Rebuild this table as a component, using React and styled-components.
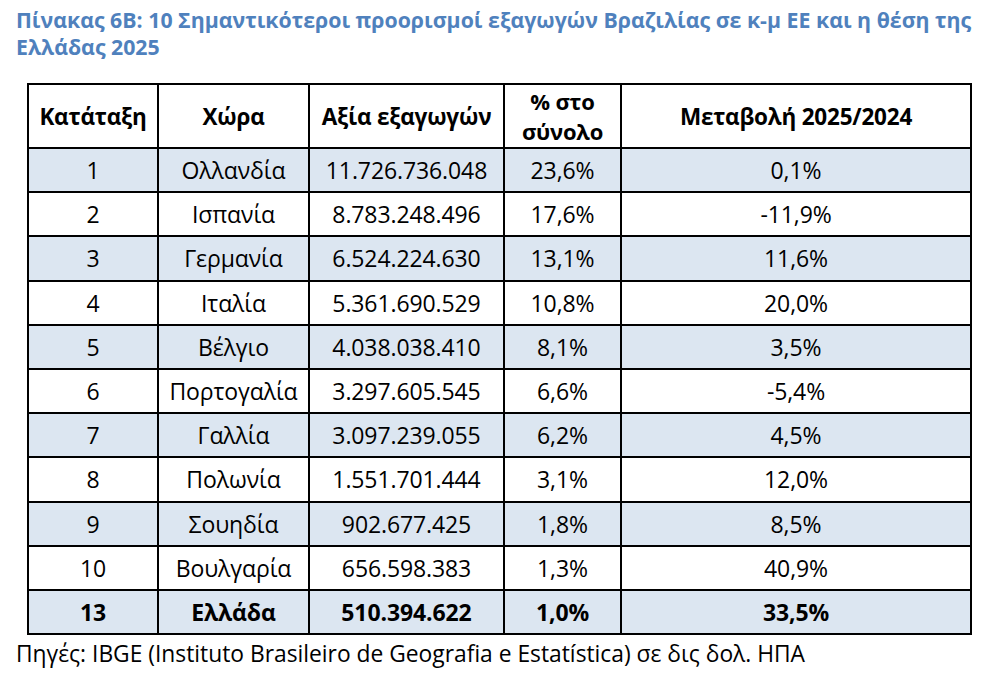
import React from 'react'
import styled, { createGlobalStyle } from 'styled-components'

const rows = [
    ['1', 'Ολλανδία', '11.726.736.048', '23,6%', '0,1%'],
    ['2', 'Ισπανία', '8.783.248.496', '17,6%', '-11,9%'],
    ['3', 'Γερμανία', '6.524.224.630', '13,1%', '11,6%'],
    ['4', 'Ιταλία', '5.361.690.529', '10,8%', '20,0%'],
    ['5', 'Βέλγιο', '4.038.038.410', '8,1%', '3,5%'],
    ['6', 'Πορτογαλία', '3.297.605.545', '6,6%', '-5,4%'],
    ['7', 'Γαλλία', '3.097.239.055', '6,2%', '4,5%'],
    ['8', 'Πολωνία', '1.551.701.444', '3,1%', '12,0%'],
    ['9', 'Σουηδία', '902.677.425', '1,8%', '8,5%'],
    ['10', 'Βουλγαρία', '656.598.383', '1,3%', '40,9%'],
]

const colWidths = [130, 151, 195, 117, 350]

const App = () => {
    return (
        <>
            <GlobalStyle />
            <Page>
                <Title>
                    Πίνακας 6B: 10 Σημαντικότεροι προορισμοί εξαγωγών Βραζιλίας σε κ-μ ΕΕ και η θέση της
                    <br />
                    Ελλάδας 2025
                </Title>
                <Table>
                    <colgroup>
                        {colWidths.map((w, i) => (
                            <col key={i} style={{ width: w }} />
                        ))}
                    </colgroup>
                    <thead>
                        <tr>
                            <HeadCell>Κατάταξη</HeadCell>
                            <HeadCell>Χώρα</HeadCell>
                            <HeadCell>Αξία εξαγωγών</HeadCell>
                            <HeadCell $twoLines>% στο<br />σύνολο</HeadCell>
                            <HeadCell>Μεταβολή 2025/2024</HeadCell>
                        </tr>
                    </thead>
                    <tbody>
                        {rows.map((r, i) => (
                            <Row key={r[0]} $shaded={i % 2 === 0}>
                                {r.map((v, j) => (
                                    <Cell key={j}>{v}</Cell>
                                ))}
                            </Row>
                        ))}
                        <Row $shaded>
                            <Cell $bold>13</Cell>
                            <Cell $bold>Ελλάδα</Cell>
                            <Cell $bold>510.394.622</Cell>
                            <Cell $bold>1,0%</Cell>
                            <Cell $bold>33,5%</Cell>
                        </Row>
                    </tbody>
                </Table>
                <Source>
                    Πηγές: IBGE (Instituto Brasileiro de Geografia e Estatística) σε δις δολ. ΗΠΑ
                </Source>
            </Page>
        </>
    )
}

const GlobalStyle = createGlobalStyle`
    body {
        margin: 0;
        background: #ffffff;
        font-family: "Open Sans", "Noto Sans", sans-serif;
        color: #000000;
    }
`

const Page = styled.div`
    width: 1005px;
    height: 699px;
    padding: 6px 0 0 16px;
    box-sizing: border-box;
    overflow: hidden;
`

const Title = styled.div`
    color: #4f81bd;
    font-weight: 700;
    font-size: 21.3px;
    line-height: 27px;
    white-space: nowrap;
`

const Table = styled.table`
    margin: 23px 0 0 11px;
    border-collapse: collapse;
    table-layout: fixed;
    width: 943px;
    border: 2px solid #000;
`

const HeadCell = styled.th`
    height: 62px;
    padding: 0 2px;
    border: 2px solid #000;
    font-size: ${p => (p.$twoLines ? '22px' : '22.5px')};
    font-weight: 700;
    line-height: ${p => (p.$twoLines ? '30px' : '27px')};
    text-align: center;
    vertical-align: middle;
    letter-spacing: -0.2px;
`

const Row = styled.tr`
    background: ${p => (p.$shaded ? '#dce6f1' : '#ffffff')};
`

const Cell = styled.td`
    height: 42.2px;
    padding: 0 2px;
    border: 2px solid #000;
    font-size: 23px;
    font-weight: ${p => (p.$bold ? 700 : 400)};
    text-align: center;
    vertical-align: middle;
    white-space: nowrap;
    letter-spacing: -0.1px;
`

const Source = styled.div`
    margin-top: 5px;
    font-size: 22.8px;
    line-height: 28px;
    white-space: nowrap;
`

export default App
